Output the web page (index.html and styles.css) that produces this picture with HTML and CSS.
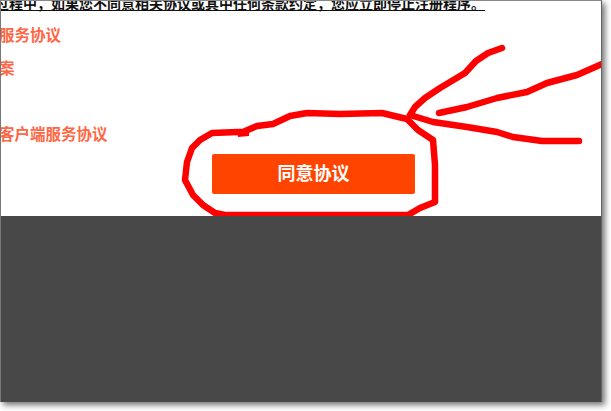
FILE: index.html
```html
<!DOCTYPE html>
<html lang="zh">
<head>
<meta charset="utf-8">
<title>同意协议</title>
<link rel="stylesheet" href="styles.css">
</head>
<body>
<div class="shot">
  <main class="page">
    <p class="notice"><u>过程中，如果您不同意相关协议或其中任何条款约定，您应立即停止注册程序。</u></p>
    <ul class="links">
      <li class="link">服务协议</li>
      <li class="link">案</li>
      <li class="link"></li>
      <li class="link">客户端服务协议</li>
    </ul>
    <div class="actions"><button class="agree" type="button">同意协议</button></div>
  </main>
  <footer class="dark"></footer>
  <svg class="marks" width="601" height="216" viewBox="0 0 601 216" aria-hidden="true">
    <path class="ink" d="M243 132 L238 132 L212 133 L200 140 L192 148 L187 162 L185 180 L193 195 L203 205 L215 213 L225 215 L408 215 L420 208 L435 202 L435 165 L433 140 L418 130 L407 119 L382 113 L340 114 L307 113 L290 116 L273 124 L257 126 Z"/>
    <path class="blob" d="M237 130 L249 129 L249 136 L238 137 Z"/>
    <path class="ink" d="M502 48 L488 53 L476 61 L465 73 L455 79 L440 88 L425 98 L415 107 L410 115 L433 122 L467 127 L497 132 L513 137 L542 141 L579 141"/>
    <path class="ink" d="M439 113 L467 107 L497 98 L527 92 L547 83 L577 75 L602 64"/>
  </svg>
</div>
</body>
</html>
```
FILE: styles.css
```css
html, body {
  margin: 0;
  height: 411px;
  overflow: hidden;
  background: #fff;
}
.shot {
  position: relative;
  display: flex;
  flex-direction: column;
  box-sizing: border-box;
  width: 602px;
  height: 402px;
  border-left: 1px solid #777;
  border-right: 1px solid #666;
  border-top: 1px solid #888;
  box-shadow: 3px 3px 6px rgba(0, 0, 0, .55);
  font-family: "Liberation Serif", "Noto Sans CJK SC", serif;
}
.page {
  height: 215px;
  overflow: hidden;
  background: #fff;
}
.notice {
  margin: -6px 0 0 -6px;
  height: 24px;
  font-size: 14px;
  line-height: 20px;
  font-weight: 700;
  color: #111;
  white-space: nowrap;
}
.links {
  margin: 0 0 0 -2px;
  padding: 0;
  list-style: none;
}
.link {
  height: 33px;
  line-height: 33px;
  font-size: 15.5px;
  font-weight: 700;
  color: #ff6644;
}
.actions {
  margin: 3px 0 0 211px;
}
.agree {
  display: block;
  width: 203px;
  height: 40px;
  padding: 0;
  border: 0;
  border-radius: 2px;
  background: #ff4400;
  color: #fff;
  font: 700 18px/40px "Liberation Serif", "Noto Sans CJK SC", serif;
}
.dark {
  flex: 1;
  background: #484848;
}
.marks {
  position: absolute;
  left: -1px;
  top: -1px;
}
.ink {
  fill: none;
  stroke: #f00;
  stroke-width: 6.5;
  stroke-linecap: round;
  stroke-linejoin: round;
}
.blob {
  fill: #f00;
}
```
